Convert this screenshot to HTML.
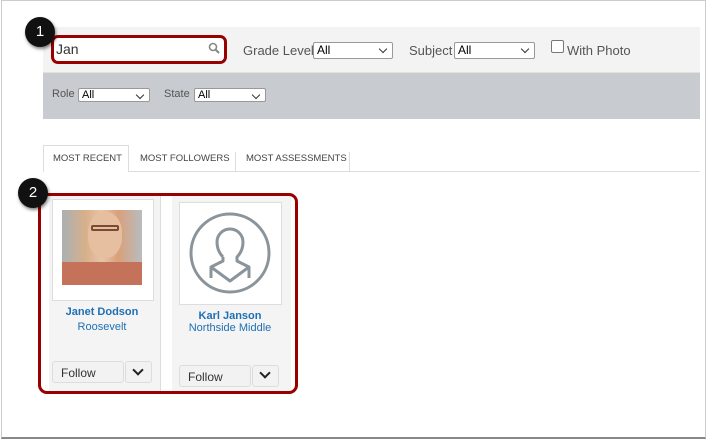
<!DOCTYPE html><html><head><style>
body{margin:0;width:707px;height:442px;background:#fff;position:relative;overflow:hidden;font-family:"Liberation Sans",sans-serif}
.a{position:absolute}
.frame{left:1px;top:0;width:705px;height:439px;border:1px solid #ccc;border-bottom:2px solid #888;box-sizing:border-box}
.sel{position:absolute;height:15px;border:1px solid #999;border-radius:2px;background:#fff;font-size:12px;line-height:15px;padding-left:3px;box-sizing:content-box;color:#000}
.sel:after{content:"";position:absolute;right:6px;top:3px;width:5px;height:5px;border-right:1.5px solid #333;border-bottom:1.5px solid #333;transform:rotate(45deg)}
.lbl{position:absolute;font-size:13px;color:#555;white-space:nowrap}
.circ{position:absolute;width:30px;height:30px;border-radius:50%;background:#111;color:#fff;font-size:15px;text-align:center;line-height:30px;box-shadow:1px 2px 3px rgba(0,0,0,.5)}
.tab{position:absolute;top:146px;height:26px;font-size:9.5px;color:#444;line-height:26px;white-space:nowrap}
.card{position:absolute;background:#f4f4f4}
.btn{position:absolute;height:22px;border:1px solid #ddd;border-radius:3px;background:#f2f2f2;font-size:12px;line-height:22px;color:#333;box-sizing:border-box;padding-left:8px}
.chev{position:absolute;width:6px;height:6px;border-right:2px solid #222;border-bottom:2px solid #222;transform:rotate(45deg)}
.nm{position:absolute;text-align:center;font-size:11px;color:#1f6fb5}
</style></head><body>
<div class="a frame"></div>
<div class="a" style="left:43px;top:27px;width:657px;height:45px;background:#f3f3f3;border-bottom:1px solid #e0e4d8"></div>
<div class="a" style="left:43px;top:73px;width:657px;height:46px;background:#c8ccd0"></div>
<div class="a" style="left:51px;top:35px;width:176px;height:29px;border:3px solid #990000;border-radius:7px;background:#fff;box-sizing:border-box"></div>
<div class="a" style="left:56px;top:41px;font-size:14px;color:#333">Jan</div>
<svg class="a" style="left:208px;top:42px" width="12" height="12" viewBox="0 0 12 12"><circle cx="5" cy="5" r="3.5" fill="none" stroke="#888" stroke-width="1.6"/><path d="M7.5 7.5L11 11" stroke="#888" stroke-width="2"/></svg>
<div class="circ" style="left:25px;top:17px">1</div>
<div class="lbl" style="left:243px;top:43px">Grade Level</div>
<div class="sel" style="left:313px;top:42px;width:75px">All</div>
<div class="lbl" style="left:409px;top:43px">Subject</div>
<div class="sel" style="left:454px;top:42px;width:76px">All</div>
<div class="a" style="left:551px;top:40px;width:11px;height:11px;border:1px solid #777;border-radius:2px;background:#fff"></div>
<div class="lbl" style="left:567px;top:43px">With Photo</div>
<div class="lbl" style="left:52px;top:88px;font-size:11px">Role</div>
<div class="sel" style="left:78px;top:88px;width:67px;height:12px;line-height:12px;font-size:11px">All</div>
<div class="lbl" style="left:164px;top:88px;font-size:11px">State</div>
<div class="sel" style="left:194px;top:88px;width:67px;height:12px;line-height:12px;font-size:11px">All</div>
<div class="a" style="left:43px;top:171px;width:657px;height:1px;background:#ddd"></div>
<div class="a" style="left:43px;top:145px;width:86px;height:27px;border:1px solid #ddd;border-bottom:none;background:#fff;box-sizing:border-box"></div>
<div class="tab" style="left:53px">MOST RECENT</div>
<div class="tab" style="left:140px">MOST FOLLOWERS</div>
<div class="a" style="left:235px;top:152px;width:1px;height:19px;background:#ddd"></div>
<div class="tab" style="left:246px">MOST ASSESSMENTS</div>
<div class="a" style="left:349px;top:152px;width:1px;height:19px;background:#ddd"></div>
<div class="card" style="left:49px;top:195px;width:111px;height:196px"></div>
<div class="a" style="left:160px;top:195px;width:1px;height:196px;background:#ddd"></div>
<div class="card" style="left:172px;top:195px;width:119px;height:196px"></div>
<div class="a" style="left:52px;top:199px;width:100px;height:100px;background:#fff;border:1px solid #ddd"></div>
<div class="a" style="left:62px;top:210px;width:80px;height:75px;background:linear-gradient(90deg,#aab0b4 0%,#d8b08a 30%,#e8c4a8 50%,#d9a07a 70%,#b8bcc0 100%)"></div>
<div class="a" style="left:62px;top:262px;width:80px;height:23px;background:#c4735a"></div>
<div class="a" style="left:88px;top:212px;width:34px;height:46px;border-radius:45%;background:#e6bfa0"></div>
<div class="a" style="left:91px;top:225px;width:28px;height:6px;border:2px solid #7a4a35;border-radius:2px;box-sizing:border-box"></div>
<div class="nm" style="left:49px;top:306px;width:106px;font-weight:bold">Janet Dodson</div>
<div class="nm" style="left:49px;top:321px;width:106px">Roosevelt</div>
<div class="btn" style="left:52px;top:361px;width:72px">Follow</div>
<div class="btn" style="left:125px;top:361px;width:27px"></div>
<div class="chev" style="left:134px;top:366px"></div>
<div class="a" style="left:179px;top:202px;width:101px;height:101px;background:#fff;border:1px solid #ddd"></div>
<svg class="a" style="left:189px;top:212px" width="82" height="82" viewBox="0 0 82 82"><circle cx="41" cy="41" r="39" fill="none" stroke="#8b949a" stroke-width="3"/><path d="M34 45c-4-4-6-9-6-15a13 13 0 0126 0c0 6-2 11-6 15v4l12 6v11M34 45v4l-12 6v11M22 55l19 14 19-14" fill="none" stroke="#8b949a" stroke-width="3" stroke-linejoin="round"/></svg>
<div class="nm" style="left:172px;top:310px;width:116px;font-weight:bold">Karl Janson</div>
<div class="nm" style="left:172px;top:322px;width:116px">Northside Middle</div>
<div class="btn" style="left:179px;top:365px;width:72px">Follow</div>
<div class="btn" style="left:252px;top:365px;width:27px"></div>
<div class="chev" style="left:261px;top:369px"></div>
<div class="a" style="left:38px;top:193px;width:260px;height:201px;border:3px solid #990000;border-radius:9px;box-sizing:border-box"></div>
<div class="circ" style="left:18px;top:178px">2</div>
</body></html>
